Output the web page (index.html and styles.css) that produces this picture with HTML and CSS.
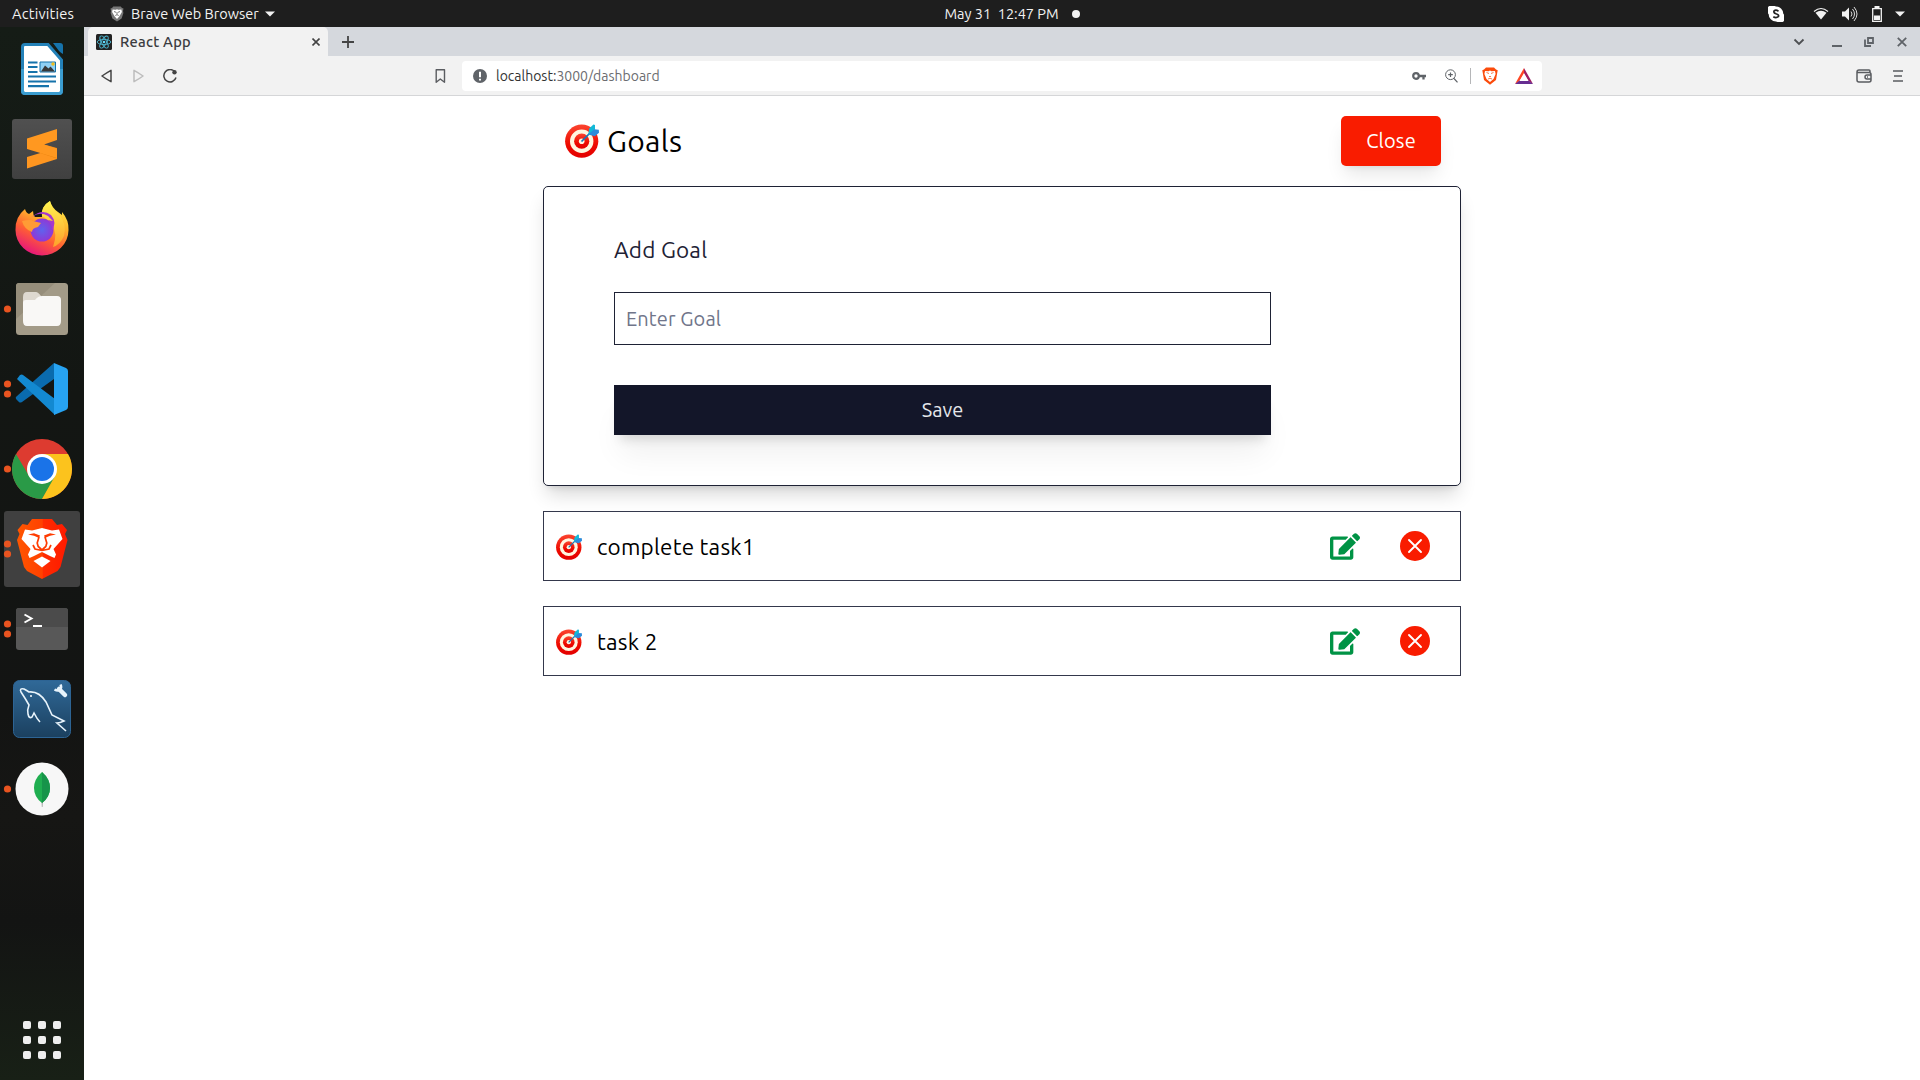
FILE: index.html
```html
<!DOCTYPE html>
<html lang="en">
<head>
<meta charset="utf-8">
<title>React App</title>
<link rel="stylesheet" href="styles.css">
</head>
<body>
<svg class="defs" width="0" height="0">
  <defs>
    <linearGradient id="ring" x1="0" y1="0" x2="0" y2="1"><stop offset="0" stop-color="#fb4530"/><stop offset=".6" stop-color="#ee0b00"/><stop offset="1" stop-color="#e30000"/></linearGradient>
    <symbol id="target" viewBox="0 0 34 34">
      <circle cx="16.7" cy="17.2" r="16.6" fill="url(#ring)"/>
      <circle cx="16.7" cy="17.2" r="11.7" fill="#fff6e0"/>
      <circle cx="16.7" cy="17.2" r="7.6" fill="url(#ring)"/>
      <circle cx="16.7" cy="17.2" r="2.8" fill="#fff6e0"/>
      <path d="M16.5 17.5 26 8" stroke="#1676b8" stroke-width="1.7"/>
      <path d="M23.2 10.6 24.2 4.5 28.4.5 30 1v4.5L25 10z" fill="#12b9d8"/>
      <path d="M23.2 10.6 29.4 5.2l4.4.5.2 3-4.2 3.5z" fill="#2b8bdb"/>
    </symbol>
    <symbol id="edit" viewBox="0 0 576 512">
      <path fill="currentColor" d="M402.6 83.2l90.2 90.2c3.8 3.8 3.8 10 0 13.8L274.4 405.6l-92.8 10.3c-12.4 1.4-22.9-9.1-21.5-21.5l10.3-92.8L388.8 83.2c3.8-3.8 10-3.8 13.8 0zm162-22.9l-48.8-48.8c-15.2-15.2-39.9-15.2-55.2 0l-35.4 35.4c-3.8 3.8-3.8 10 0 13.8l90.2 90.2c3.8 3.8 10 3.8 13.8 0l35.4-35.4c15.2-15.3 15.2-40 0-55.2zM384 346.2V448H64V128h229.8c3.2 0 6.2-1.3 8.5-3.5l40-40c7.6-7.6 2.2-20.5-8.5-20.5H48C21.5 64 0 85.5 0 112v352c0 26.5 21.5 48 48 48h352c26.5 0 48-21.5 48-48V306.2c0-10.7-12.9-16-20.5-8.5l-40 40c-2.2 2.3-3.5 5.3-3.5 8.5z"/>
    </symbol>
    <symbol id="remove" viewBox="0 0 30 30">
      <circle cx="15" cy="15" r="15" fill="currentColor"/>
      <path d="m9 9 12 12M21 9 9 21" stroke="#fff" stroke-width="1.9" stroke-linecap="round"/>
    </symbol>
  </defs>
</svg>

<header class="topbar">
  <div class="topbar-left">
    <span class="activities">Activities</span>
    <svg class="app-mark" width="14" height="16" viewBox="0 0 14 16"><path d="M3.3.5h7.4L12 2l1.5.5L13 5l.4 2-1.8 5.4L7 15.6l-4.600-3.200L.6 7 1 5 .5 2.500 2 2z" fill="#777"/><path d="m2.600 3.600 3 .2L7 3.200l1.400.6 3-.2.5 2.300-2.600 4.700L7 13l-2.300-2.400L2.100 5.900z" fill="#fff"/><path d="m4 5.500 2 .8M10 5.500l-2 .8M7 6v2.500M5.300 9.500 7 8.700l1.700.8" stroke="#555" stroke-width=".8" fill="none"/></svg>
    <span class="app-name">Brave Web Browser</span>
    <svg class="caret" width="10" height="6"><path d="M0 .5h10L5 5.500z" fill="#f2f2f2"/></svg>
  </div>
  <div class="clock"><span>May 31&nbsp; 12:47 PM</span><i class="notice"></i></div>
  <div class="tray">
    <svg width="16" height="16"><path d="M4.500 0A4.500 4.500 0 0 1 8 .6 7.400 7.400 0 0 1 15.400 8 4.500 4.500 0 0 1 11.500 16 5 5 0 0 1 8 15.400 7.400 7.400 0 0 1 .6 8 4.500 4.500 0 0 1 4.500 0z" fill="#fff"/><path d="M10.500 5.200Q8 3.500 6.200 4.800 5 6.700 8 7.700q3.500 1 2.300 3Q8 12.500 5.300 10.700" stroke="#222" stroke-width="1.700" fill="none"/></svg>
    <svg class="wifi" width="16" height="13"><path d="M1 4.500Q8-1.500 15 4.500" stroke="#f2f2f2" stroke-width="1.200" fill="none"/><path d="M2.500 5.800Q8 1.600 13.500 5.800L8 12.500z" fill="#f2f2f2"/></svg>
    <svg class="sound" width="16" height="16"><path d="M0 5.500h3l4-4v13l-4-4H0z" fill="#f2f2f2"/><path d="M9 5.500q2 2.500 0 5M10.500 3q4 5 0 10M12 1q6 7 0 14" stroke="#ddd" fill="none"/></svg>
    <svg class="battery" width="10" height="16"><path d="M.7 2.700h8.600v12.600H.7z" stroke="#f2f2f2" stroke-width="1.300" fill="none"/><path d="M2.500 0h5v2.500h-5zM2 9.500h6V14H2z" fill="#f2f2f2"/></svg>
    <svg class="tray-caret" width="10" height="6"><path d="M0 .5h10L5 5.500z" fill="#f2f2f2"/></svg>
  </div>
</header>

<div class="desktop">
  <nav class="dock">
    <svg class="slot" viewBox="0 0 84 80"><path d="M25 15.500h23L61.500 31v31q0 2.500-2.500 2.500H25q-2.500 0-2.500-2.500V18q0-2.500 2.500-2.500z" fill="#fff" stroke="#2381b8" stroke-width="3"/><path d="M22.500 40v22q0 2.500 2.500 2.500h34q2.500 0 2.500-2.500V40" fill="none" stroke="#3b9dd0" stroke-width="3"/><path d="M51.500 13l12 14V13z" fill="#141a15"/><path d="M53 14h7q3 0 3 3v8q-2-1-4-3z" fill="#1673ab"/><path d="M28 33.500h9.500M28 38h9.500M28 43h9.500M28 47.500h28M28 52.500h28M28 57.200h21" stroke="#1673ab" stroke-width="2.200"/><path d="M40 33h15.500v10H40z" fill="#8fd0f5" stroke="#1673ab"/><path d="m41 42.500 4-6 3.500 3 2-2 4.500 5z" fill="#383838"/><circle cx="53" cy="35" r="1.700" fill="#f3bd1b"/></svg>
    <svg class="slot" viewBox="0 0 84 80"><defs><linearGradient id="sub" x1="0" y1="0" x2="0" y2="1"><stop offset="0" stop-color="#505050"/><stop offset="1" stop-color="#404040"/></linearGradient></defs><rect x="12" y="10" width="60" height="60" rx="3" fill="url(#sub)"/><path d="m27 48 30-9v11l-30 9.500z" fill="#ff9620"/><path d="m40 44 17 5.500V39l-13-3.500z" fill="#e8820f"/><path d="m27 29.500 30-9.500v11l-13 4.500L57 39.500V49L27 40z" fill="#ff9820"/></svg>
    <svg class="slot" viewBox="0 0 84 80"><defs><linearGradient id="fx" x1=".8" y1="0" x2=".3" y2="1"><stop offset="0" stop-color="#fff44f"/><stop offset=".35" stop-color="#ffb52c"/><stop offset=".65" stop-color="#ff5f33"/><stop offset="1" stop-color="#e5127f"/></linearGradient><linearGradient id="fy" x1="0" y1="0" x2="0" y2="1"><stop offset="0" stop-color="#fff44f"/><stop offset="1" stop-color="#ffa02b"/></linearGradient><radialGradient id="fp"><stop offset="0" stop-color="#5e63ee"/><stop offset="1" stop-color="#9038d5"/></radialGradient></defs><path d="M25 20q1 4 4 5l4-3q0 4 2 6h7q-2-10 8-16 2 7 8 11l4 3V23q7 8 6.500 18A26.500 25.500 0 0 1 15.500 41Q15 28 25 20z" fill="url(#fx)"/><path d="M42 27q-1-10 8-15 1 7 9 13 8 10 5 22-4 9-11 11 5-14-1-22-4-6-10-9z" fill="url(#fy)"/><circle cx="42" cy="41" r="11.500" fill="url(#fp)"/><path d="M32 28q8-6 16-1l5 5-5-1q6 7 3 12 7-9 0-17-9-7-19 2z" fill="#a638ce"/><path d="M22 32q9-2 11 0l8 2-3 4q-6 1-6 5-8-3-10-11z" fill="#ff9b35"/></svg>
    <svg class="slot" viewBox="0 0 84 80"><circle cx="7.500" cy="40" r="3.600" fill="#e95420"/><rect x="16" y="14" width="52" height="52" rx="3.500" fill="#a39b88"/><path d="m55 14-39 36V17q0-3 3-3z" fill="#968e7b"/><path d="M23 28q0-5 4-5h9q2 0 5 4v9H23z" fill="#ded9d0"/><path d="M23 34q0-3 3-3h9q3-4 7-4h15q4 0 4 4v21q0 5-4 5H27q-4 0-4-5z" fill="#f9f8f6"/></svg>
    <svg class="slot" viewBox="0 0 84 80"><circle cx="7.500" cy="35" r="3.600" fill="#e95420"/><circle cx="7.500" cy="45" r="3.600" fill="#e95420"/><path d="M54 14v16L22 53q-2 1-3 0l-3-3q-1-2 1-3z" fill="#0a6bae"/><path d="m17 30 3-4q2-1 3 0l32 24v16z" fill="#1389d1"/><path d="M54 14l12 5q2 1 2 3v36q0 2-2 3l-12 5z" fill="#27a3f2"/></svg>
    <svg class="slot" viewBox="0 0 84 80"><circle cx="7.500" cy="40" r="3.600" fill="#e95420"/><circle cx="42" cy="40" r="30" fill="#dd3b30"/><path d="M16 25A30 30 0 0 0 42 70L56 47 42 40 29 47z" fill="#2a9a47"/><path d="M68 25A30 30 0 0 1 42 70L55 47 42 25z" fill="#fcc31d"/><circle cx="42" cy="40" r="15" fill="#fff"/><circle cx="42" cy="40" r="12" fill="#1a73e8"/></svg>
    <svg class="slot" viewBox="0 0 84 80"><defs><linearGradient id="br"><stop offset="0" stop-color="#ff5600"/><stop offset=".5" stop-color="#ff4100"/><stop offset=".52" stop-color="#ff2b00"/><stop offset="1" stop-color="#ff1a00"/></linearGradient></defs><rect x="4" y="2" width="76" height="76" rx="3" fill="#404040"/><circle cx="7.500" cy="35" r="3.600" fill="#e95420"/><circle cx="7.500" cy="45" r="3.600" fill="#e95420"/><path d="M32 10h20l5 6 5-1 5 6-2 4 2.500 6-7 27-3 4-15.500 8L27 62l-3-4-7-27 2.500-6-2-4 5-6 5 1z" fill="url(#br)"/><path d="M25 20.500l7 1L42 19l10 2.500 7-1 3.500 9.500-9 10 2.500 5.500-1.500 3.500-4.500-2-8-4-8 4-4.500 2-1.500-3.500 2.500-5.500-9-10z" fill="#fff"/><path d="M28 25.500 34 24.300l6 2.200-1 2.500-5-2.200zM56 25.500l-6-1.200-6 2.200 1 2.500 5-2.200z" fill="#ff3b00"/><path d="m39 28-1.800 6 1 3.500L42 41l3.800-3.500 1-3.500L45 28M33 36l2 4 7 1.500 7-1.500 2-4" fill="none" stroke="#ff3b00" stroke-width="1.700"/><path d="M33.500 52l8.500-4.500 8.500 4.500L42 58.500z" fill="#fff"/></svg>
    <svg class="slot" viewBox="0 0 84 80"><circle cx="7.500" cy="35" r="3.600" fill="#e95420"/><circle cx="7.500" cy="45" r="3.600" fill="#e95420"/><rect x="16" y="19" width="52" height="42" rx="3" fill="#585858"/><path d="M16 38V22q0-3 3-3h46q3 0 3 3v16z" fill="#4b4b4b"/><path d="m24.500 25.500 7 4-7 4M33 37h9" stroke="#fff" stroke-width="2" fill="none"/></svg>
    <svg class="slot" viewBox="0 0 84 80"><defs><linearGradient id="my" x1="0" y1="0" x2="0" y2="1"><stop offset="0" stop-color="#306998"/><stop offset="1" stop-color="#1b405f"/></linearGradient></defs><rect x="13.500" y="11.500" width="57" height="57" rx="6" fill="url(#my)" stroke="#2d6494"/><path d="M40 53q-3-3-6-9l-2 4q-3 2-4-3-1-4 1-9-4-7-8-13-2-4 3-3 2 1 5 3 10-1 17 10l6 13 12 6q-4 2-7 2l9 8" fill="none" stroke="#e7f3fb" stroke-width="1.600"/><circle cx="31" cy="27" r="1" fill="#fff"/><path d="m59 20 6 6" stroke="#e7f3fb" stroke-width="4.500" stroke-linecap="round"/><path d="M54.500 20.500q3.500 2 5.500 0t.5-5" stroke="#e7f3fb" stroke-width="2.500" fill="none"/></svg>
    <svg class="slot" viewBox="0 0 84 80"><circle cx="7.500" cy="40" r="3.600" fill="#e95420"/><circle cx="42" cy="40" r="26.500" fill="#f7f7f7"/><path d="M41.500 52h1.500l-.4 6h-.8z" fill="#aaa"/><path d="M42 23q8 7 8 16 0 9-8 15-8-6-8-15 0-9 8-16z" fill="#1fae50"/><path d="M42 23q8 7 8 16 0 9-8 15z" fill="#17944a"/></svg>
    <svg class="grid-icon" width="38" height="38" fill="#eee"><rect width="8" height="8" rx="2"/><rect x="15" width="8" height="8" rx="2"/><rect x="30" width="8" height="8" rx="2"/><rect y="15" width="8" height="8" rx="2"/><rect x="15" y="15" width="8" height="8" rx="2"/><rect x="30" y="15" width="8" height="8" rx="2"/><rect y="30" width="8" height="8" rx="2"/><rect x="15" y="30" width="8" height="8" rx="2"/><rect x="30" y="30" width="8" height="8" rx="2"/></svg>
  </nav>

  <section class="browser">
    <div class="tabstrip">
      <div class="tab">
        <svg width="16" height="16"><rect width="16" height="16" rx="1.500" fill="#222"/><g fill="none" stroke="#4db5cf" stroke-width=".9"><ellipse cx="8" cy="8" rx="6.800" ry="2.600"/><ellipse cx="8" cy="8" rx="6.800" ry="2.600" transform="rotate(60 8 8)"/><ellipse cx="8" cy="8" rx="6.800" ry="2.600" transform="rotate(120 8 8)"/></g><circle cx="8" cy="8" r="1.300" fill="#61dafb"/></svg>
        <span class="tab-title">React App</span>
        <svg class="tab-close" width="8" height="8"><path d="m.5.5 7 7m0-7-7 7" stroke="#444" stroke-width="1.600"/></svg>
      </div>
      <svg class="new-tab" width="12" height="12"><path d="M6 0v12M0 6h12" stroke="#444" stroke-width="1.800"/></svg>
      <div class="window-buttons">
        <svg width="12" height="8"><path d="m1.500 1.500 4.500 4.500 4.500-4.500" stroke="#4d4f52" stroke-width="1.800" fill="none"/></svg>
        <svg class="minimize" width="10" height="12"><path d="M0 10h10" stroke="#5f6368" stroke-width="2"/></svg>
        <svg class="restore" width="10" height="10"><path d="M4 1h5v5H4zM1 2.500V9h6" stroke="#5f6368" stroke-width="1.800" fill="none"/></svg>
        <svg class="close-window" width="10" height="10"><path d="m.8.8 8.400 8.400m0-8.400L.8 9.200" stroke="#5f6368" stroke-width="1.800"/></svg>
      </div>
    </div>
    <div class="toolbar">
      <svg width="11" height="14"><path d="M10 1.300v11.400Q5 10 1 7q5-3.500 9-5.700z" stroke="#444" stroke-width="1.500" stroke-linejoin="round" fill="none"/></svg>
      <svg class="forward" width="11" height="14"><path d="M1 1.300v11.400Q6 10 10 7 5 3.500 1 1.300z" stroke="#bdbdbd" stroke-width="1.500" stroke-linejoin="round" fill="none"/></svg>
      <svg class="reload" width="14" height="14"><path d="M12 3A6.200 6.200 0 1 0 13 8.500" stroke="#444" stroke-width="1.500" fill="none"/><circle cx="11.500" cy="3.200" r="2.200" fill="#444"/></svg>
      <svg class="bookmark" width="11" height="14"><path d="M1.200.8h8.300v12.400L5.300 10l-4.100 3.200z" stroke="#5a5c60" stroke-width="1.400" stroke-linejoin="round" fill="none"/></svg>
      <div class="address">
        <svg width="14" height="14"><circle cx="7" cy="7" r="7" fill="#5f6368"/><path d="M7 2.800v5.400M7 9.700v1.900" stroke="#fff" stroke-width="2"/></svg>
        <span class="url">localhost:<span class="url-rest">3000/dashboard</span></span>
        <svg class="key" width="14" height="10"><circle cx="4" cy="5" r="2.800" stroke="#5f6368" stroke-width="2.200" fill="none"/><path d="M6 5h8M11.500 5v3.500" stroke="#5f6368" stroke-width="2.300"/></svg>
        <svg class="lens" width="13" height="14"><circle cx="5.500" cy="5.700" r="4.900" stroke="#5f6368" fill="none"/><path d="M5.500 3.500V8M3.200 5.700h4.600M9 9.500l3.500 3.800" stroke="#5f6368" stroke-width="1.200"/></svg>
        <i class="divider"></i>
        <svg class="shield" width="16" height="18"><path d="M4 .5h8l2 2 1.700.8-.5 2.700L14 13l-6 4.700L2 13 .8 6 .3 3.300 2 2.500z" fill="#fb4b0b"/><path d="m3 4 3.500.2L8 3.500l1.500.7L13 4l.6 3-2.100 5L8 15l-3.500-3-2.100-5z" fill="#fff"/><path d="m4.500 5.500 2.500 1M11.500 5.500 9 6.500M7 9l1 1 1-1M6 12q2-1.500 4 0" stroke="#fb7b4b" fill="none"/></svg>
        <svg class="rewards" width="18" height="16"><path d="M9 0v6L4.500 13 0 16z" fill="#ff4724"/><path d="m9 0 9 16-4.500-3L9 6z" fill="#9e1f63"/><path d="M0 16l4.500-3.500h9L18 16z" fill="#662d91"/><path d="m9 5 4.500 8h-9z" fill="#fff"/></svg>
      </div>
      <svg class="wallet" width="16" height="14"><path d="M14 3.500V2q0-1-1-1H3Q1 1 1 3v8q0 2 2 2h10q2 0 2-2V5.500q0-2-2-2H1M15 6h-4q-2 0-2 2t2 2h4M11 8h1" stroke="#5a5c60" stroke-width="1.500" fill="none"/></svg>
      <svg class="menu" width="10" height="12"><path d="M0 1h10M1 6h8M0 11h10" stroke="#5a5c60" stroke-width="1.700"/></svg>
    </div>

    <main class="page">
      <div class="goals">
        <div class="goals-head">
          <svg class="head-icon"><use href="#target"/></svg>
          <h1 class="title">Goals</h1>
          <button class="close-btn">Close</button>
        </div>
        <form class="goal-form">
          <label class="label" for="goal">Add Goal</label>
          <input class="field" id="goal" placeholder="Enter Goal">
          <button class="save" type="button">Save</button>
        </form>
        <div class="goal">
          <svg class="goal-icon"><use href="#target"/></svg>
          <span class="goal-text">complete task1</span>
          <svg class="edit"><use href="#edit"/></svg>
          <svg class="remove"><use href="#remove"/></svg>
        </div>
        <div class="goal">
          <svg class="goal-icon"><use href="#target"/></svg>
          <span class="goal-text">task 2</span>
          <svg class="edit"><use href="#edit"/></svg>
          <svg class="remove"><use href="#remove"/></svg>
        </div>
      </div>
    </main>
  </section>
</div>
</body>
</html>
```
FILE: styles.css
```css
* { box-sizing: border-box; }
body {
  margin: 0;
  width: 1920px;
  height: 1080px;
  overflow: hidden;
  display: flex;
  flex-direction: column;
  font-family: Ubuntu, "Noto Sans", sans-serif;
  background: #fff;
}
svg { display: block; flex: none; }
.defs { height: 0; }
span { white-space: nowrap; }

/* system bar */
.topbar {
  height: 27px;
  flex: none;
  display: grid;
  grid-template-columns: 1fr auto 1fr;
  align-items: center;
  background: #1e1e1e;
  color: #f2f2f2;
  font-size: 14.5px;
  line-height: 17px;
}
.topbar-left { display: flex; align-items: center; padding-left: 12px; }
.activities { width: 98px; font-size: 14.67px; letter-spacing: .2px; }
.topbar-left span, .clock span { margin-top: -1px; }
.app-name { margin-left: 7px; }
.caret { margin-left: 6px; }
.clock { display: flex; align-items: center; gap: 13px; padding-left: 104px; }
.notice { width: 8px; height: 8px; border-radius: 50%; background: #f2f2f2; }
.tray { display: flex; align-items: center; justify-content: flex-end; padding-right: 15px; }
.wifi { margin-left: 29px; }
.sound { margin-left: 13px; }
.battery { margin-left: 14px; }
.tray-caret { margin-left: 13px; }

.desktop { flex: 1; display: flex; min-height: 0; }

/* launcher */
.dock {
  width: 84px;
  padding-top: 2px;
  display: flex;
  flex-direction: column;
  background: linear-gradient(#151c16, #131613 35%, #131413 65%, #161614 75%, #131413 85%, #182016);
}
.slot { width: 84px; height: 80px; }
.grid-icon { margin: auto 0 21px 23px; }

/* browser chrome */
.browser { flex: 1; display: flex; flex-direction: column; }
.tabstrip {
  height: 29px;
  padding-left: 4px;
  display: flex;
  align-items: center;
  background: #d5d8dd;
}
.tab {
  width: 240px;
  height: 29px;
  padding: 0 8px;
  display: flex;
  align-items: center;
  background: #f2f2f2;
  border-radius: 5px 5px 0 0;
}
.tab-title { margin-left: 8px; font-size: 14.67px; font-weight: 500; letter-spacing: .25px; color: #3b3c40; }
.tab-close { margin-left: auto; }
.new-tab { margin-left: 14px; }
.window-buttons { margin-left: auto; padding-right: 13px; display: flex; align-items: center; }
.minimize { margin-left: 27px; }
.restore { margin-left: 22px; }
.close-window { margin-left: 23px; }
.toolbar {
  height: 40px;
  padding: 0 17px;
  display: flex;
  align-items: center;
  background: #f2f2f2;
  border-bottom: 1px solid #d5d6d8;
}
.forward { margin-left: 21px; }
.reload { margin-left: 19px; }
.bookmark { margin-left: 258px; }
.address {
  width: 1080px;
  height: 30px;
  margin-left: 16px;
  padding: 0 9px 0 11px;
  display: flex;
  align-items: center;
  background: #fff;
  border-radius: 4px;
}
.url { margin-left: 9px; font-size: 14px; color: #333; }
.url-rest { color: #6b6c70; }
.key { margin-left: auto; }
.lens { margin-left: 19px; }
.divider { width: 1px; height: 16px; margin: 0 11px 0 12px; background: #b5b6b8; }
.rewards { margin-left: 17px; }
.wallet { margin-left: auto; }
.menu { margin-left: 21px; }

/* page */
.page { flex: 1; padding-top: 20px; display: flex; justify-content: center; }
.goals { width: 918px; }
.goals-head { height: 50px; padding: 0 20px 0 22px; display: flex; align-items: center; }
.head-icon { width: 34px; height: 34px; }
.title { margin: 0 auto 0 8px; font-size: 30px; font-weight: 400; letter-spacing: .3px; color: #000; }
.close-btn {
  width: 100px;
  height: 50px;
  padding: 0 0 2px;
  border: 0;
  border-radius: 5px;
  background: #f91c00;
  color: #fff;
  font: 400 20px Ubuntu, "Noto Sans", sans-serif;
  letter-spacing: .15px;
  box-shadow: 0 12px 19px -4px rgba(0, 0, 0, .1), 0 5px 7px -5px rgba(0, 0, 0, .1);
}
.goal-form {
  height: 300px;
  margin-top: 20px;
  padding: 45px 70px 0;
  display: flex;
  flex-direction: column;
  border: 1px solid #1e2235;
  border-radius: 5px;
  box-shadow: 0 12px 19px -4px rgba(0, 0, 0, .16), 0 5px 7px -5px rgba(0, 0, 0, .16);
}
.label { height: 60px; font-size: 22.5px; line-height: 36px; letter-spacing: .2px; color: #1e2235; }
.field {
  width: 657px;
  height: 53px;
  padding: 0 11px 1px;
  border: 1px solid #1e2235;
  border-radius: 0;
  background: #fff;
  font: 400 20px Ubuntu, "Noto Sans", sans-serif;
  letter-spacing: .1px;
}
.field::placeholder { color: #70758a; opacity: 1; }
.save {
  width: 657px;
  height: 50px;
  margin-top: 40px;
  padding-bottom: 2px;
  border: 0;
  background: #131629;
  color: #e5e7eb;
  font: 400 20px Ubuntu, "Noto Sans", sans-serif;
  box-shadow: 0 25px 31px -6px rgba(0, 0, 0, .06), 0 10px 12px -6px rgba(0, 0, 0, .14);
}
.goal {
  height: 70px;
  margin-top: 25px;
  padding: 0 30px 0 12px;
  display: flex;
  align-items: center;
  border: 1px solid #34384c;
  background: #fff;
}
.goal-icon { width: 26px; height: 26px; margin-top: 2px; }
.goal-text { margin: 0 auto 0 15px; font-size: 22.5px; letter-spacing: .2px; color: #000; }
.edit { width: 30px; height: 27px; color: #009345; }
.remove { width: 30px; height: 30px; margin-left: 40px; color: #f91c00; }
```
